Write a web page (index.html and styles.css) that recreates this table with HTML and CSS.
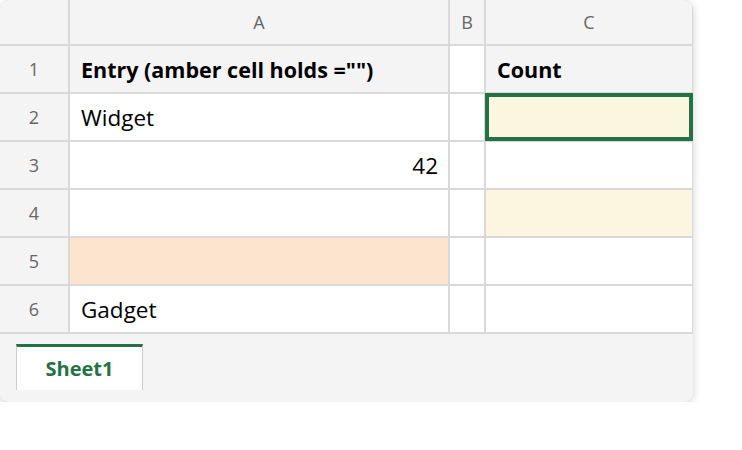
FILE: index.html
```html
<!DOCTYPE html>
<html>
<head>
<meta charset="utf-8">
<link rel="stylesheet" href="styles.css">
</head>
<body>
<div class="card">
  <div class="grid">
    <div class="hd corner"></div>
    <div class="hd col">A</div>
    <div class="hd col">B</div>
    <div class="hd col">C</div>

    <div class="hd rown">1</div>
    <div class="cell title">Entry (amber cell holds ="")</div>
    <div class="cell"></div>
    <div class="cell title">Count</div>

    <div class="hd rown">2</div>
    <div class="cell">Widget</div>
    <div class="cell"></div>
    <div class="cell amber selected"></div>

    <div class="hd rown">3</div>
    <div class="cell num">42</div>
    <div class="cell"></div>
    <div class="cell"></div>

    <div class="hd rown">4</div>
    <div class="cell"></div>
    <div class="cell"></div>
    <div class="cell amber"></div>

    <div class="hd rown">5</div>
    <div class="cell peach"></div>
    <div class="cell"></div>
    <div class="cell"></div>

    <div class="hd rown">6</div>
    <div class="cell">Gadget</div>
    <div class="cell"></div>
    <div class="cell"></div>
  </div>
  <div class="tabs">
    <div class="tab">Sheet1</div>
  </div>
</div>
</body>
</html>
```
FILE: styles.css
```css
html, body {
  margin: 0;
  padding: 0;
  background: #ffffff;
}
body {
  font-family: "Open Sans", "Noto Sans", sans-serif;
}
.card {
  width: 693px;
  height: 402px;
  border-radius: 9px;
  overflow: hidden;
  background: #f4f4f4;
  box-shadow: 0 2px 8px rgba(0, 0, 0, 0.18);
  display: flex;
  flex-direction: column;
}
.grid {
  display: grid;
  grid-template-columns: 68px 378px 34px 206px;
  grid-template-rows: 44px repeat(6, 46px);
  gap: 2px;
  background: #d9d9d9;
  padding: 0 1px 2px 0;
  width: max-content;
}
.hd {
  background: #f4f4f4;
  color: #666666;
  font-size: 18px;
  display: flex;
  align-items: center;
  justify-content: center;
}
.cell {
  background: #ffffff;
  color: #000000;
  font-size: 22.5px;
  display: flex;
  align-items: center;
  padding: 0 10px 0 11px;
  white-space: nowrap;
}
.cell.title {
  background: #f4f4f4;
  font-weight: 700;
  font-size: 21.5px;
}
.cell.num {
  justify-content: flex-end;
}
.cell.amber {
  background: #fcf5df;
}
.cell.peach {
  background: #fce4cf;
}
.cell.selected {
  position: relative;
  z-index: 1;
  box-shadow: 0 0 0 1px #217346, inset 0 0 0 3px #217346;
}
.tabs {
  flex: 1;
  display: flex;
  align-items: flex-start;
  padding: 10px 0 0 16px;
}
.tab {
  width: 125px;
  height: 43px;
  background: #ffffff;
  border-top: 3px solid #217346;
  border-left: 1px solid #cccccc;
  border-right: 1px solid #cccccc;
  color: #217346;
  font-weight: 700;
  font-size: 20px;
  display: flex;
  align-items: center;
  justify-content: center;
}
```
